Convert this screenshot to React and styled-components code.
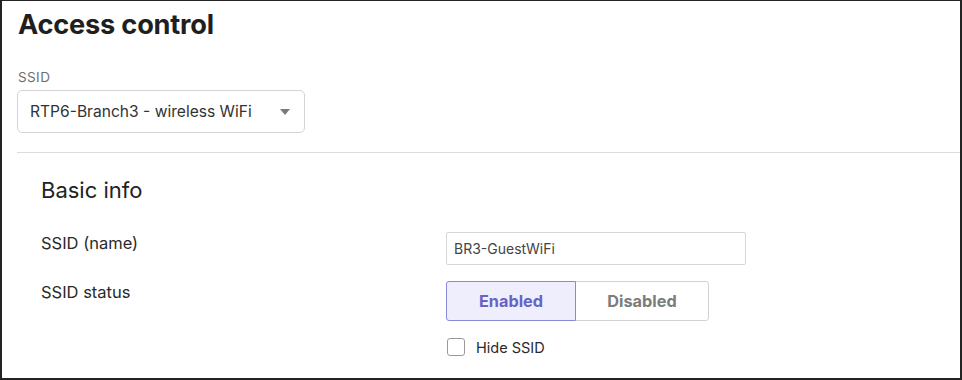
import React from 'react'
import styled, { createGlobalStyle } from 'styled-components'

const Global = createGlobalStyle`
  body {
    margin: 0;
    background: #fff;
    font-family: Inter, "Noto Sans", "Liberation Sans", sans-serif;
  }
`

export default function App() {
  return (
    <>
      <Global />
      <Frame>
        <Header>
          <Title>Access control</Title>
          <FieldLabel>SSID</FieldLabel>
          <Select>
            <span>RTP6-Branch3 - wireless WiFi</span>
            <Caret />
          </Select>
        </Header>
        <Divider />
        <Section>
          <SectionTitle>Basic info</SectionTitle>
          <Row>
            <RowLabel>SSID (name)</RowLabel>
            <TextInput defaultValue="BR3-GuestWiFi" />
          </Row>
          <Row top="16px">
            <RowLabel>SSID status</RowLabel>
            <Controls>
              <Toggle>
                <ToggleButton active>Enabled</ToggleButton>
                <ToggleButton>Disabled</ToggleButton>
              </Toggle>
              <CheckRow>
                <Box />
                <span>Hide SSID</span>
              </CheckRow>
            </Controls>
          </Row>
        </Section>
      </Frame>
    </>
  )
}

const Frame = styled.div`
  box-sizing: border-box;
  width: 962px;
  height: 380px;
  border: 2px solid #232323;
  border-top-width: 1px;
  overflow: hidden;
  color: #1f1f1f;
`

const Header = styled.div`
  padding: 8px 0 0 15px;
`

const Title = styled.h1`
  margin: 0;
  font-size: 27.2px;
  font-weight: 700;
  line-height: 32px;
  letter-spacing: -0.2px;
  padding-left: 1px;
`

const FieldLabel = styled.div`
  margin-top: 28px;
  font-size: 13.5px;
  line-height: 16px;
  color: #6f6f6f;
  letter-spacing: 0.4px;
  padding-left: 1px;
`

const Select = styled.div`
  box-sizing: border-box;
  margin-top: 5px;
  width: 288px;
  height: 43px;
  border: 1px solid #d4d4d4;
  border-radius: 5px;
  display: flex;
  align-items: center;
  justify-content: space-between;
  padding: 0 14px 0 12px;
  font-size: 15.6px;
  color: #333;
`

const Caret = styled.span`
  width: 0;
  height: 0;
  border-left: 5.5px solid transparent;
  border-right: 5.5px solid transparent;
  border-top: 6px solid #7a7a7a;
`

const Divider = styled.div`
  margin: 19px 0 0 15px;
  height: 1px;
  background: #dcdcdc;
`

const Section = styled.div`
  padding: 23px 0 0 39px;
`

const SectionTitle = styled.h2`
  margin: 0 0 28px;
  font-size: 22px;
  font-weight: 400;
  line-height: 28px;
  color: #222;
`

const Row = styled.div`
  display: grid;
  grid-template-columns: 405px 1fr;
  align-items: start;
  margin-top: ${p => p.top || '0'};
`

const RowLabel = styled.div`
  font-size: 16.5px;
  line-height: 22px;
  color: #2a2a2a;
`

const TextInput = styled.input`
  box-sizing: border-box;
  width: 300px;
  height: 33px;
  border: 1px solid #d6d6d6;
  border-radius: 2px;
  padding: 0 7px;
  font-family: inherit;
  font-size: 14px;
  color: #444;
  outline: none;
`

const Controls = styled.div`
  display: flex;
  flex-direction: column;
  gap: 17px;
`

const Toggle = styled.div`
  display: flex;
`

const ToggleButton = styled.button`
  box-sizing: border-box;
  width: ${p => (p.active ? '130px' : '134px')};
  height: 40px;
  font-family: inherit;
  font-size: 16.3px;
  font-weight: 700;
  border: 1px solid ${p => (p.active ? '#8b88d8' : '#d2d2d2')};
  background: ${p => (p.active ? '#eeeefc' : '#fff')};
  color: ${p => (p.active ? '#6663c4' : '#7c7c7c')};
  border-radius: ${p => (p.active ? '3px 0 0 3px' : '0 3px 3px 0')};
  margin-left: ${p => (p.active ? '0' : '-1px')};
  position: relative;
  z-index: ${p => (p.active ? 1 : 0)};
  cursor: pointer;
`

const CheckRow = styled.label`
  display: flex;
  align-items: center;
  gap: 11px;
  font-size: 14.5px;
  color: #2a2a2a;
  padding-left: 1px;
`

const Box = styled.span`
  box-sizing: border-box;
  width: 18px;
  height: 18px;
  border: 1px solid #9a9a9a;
  border-radius: 3px;
  background: #fff;
`
